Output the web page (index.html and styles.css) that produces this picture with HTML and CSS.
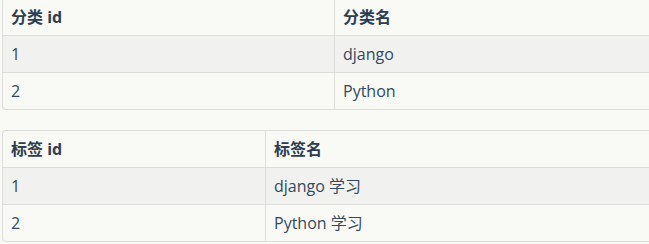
FILE: index.html
```html
<!DOCTYPE html>
<html>
<head>
<meta charset="utf-8">
<link rel="stylesheet" href="styles.css">
</head>
<body>
<div class="page">
  <table class="grid grid-first">
    <thead>
      <tr><th class="col-a1">分类 id</th><th>分类名</th></tr>
    </thead>
    <tbody>
      <tr class="odd"><td>1</td><td>django</td></tr>
      <tr><td>2</td><td>Python</td></tr>
    </tbody>
  </table>
  <table class="grid grid-second">
    <thead>
      <tr><th class="col-a2">标签 id</th><th>标签名</th></tr>
    </thead>
    <tbody>
      <tr class="odd"><td>1</td><td>django 学习</td></tr>
      <tr><td>2</td><td>Python 学习</td></tr>
    </tbody>
  </table>
</div>
</body>
</html>
```
FILE: styles.css
```css
html, body {
  margin: 0;
  padding: 0;
  background: #f9f9f5;
}
body {
  font-family: "Open Sans", "Noto Sans CJK SC", sans-serif;
  font-size: 16px;
  color: #34495e;
  overflow: hidden;
  width: 649px;
}
.page {
  display: flex;
  flex-direction: column;
  gap: 20px;
  padding-left: 2px;
  margin-top: -2px;
  overflow: hidden;
}
.grid {
  border-collapse: separate;
  border-spacing: 0;
  width: 680px;
  flex: none;
  border-top: 1px solid #dddddb;
  border-left: 1px solid #dddddb;
  border-radius: 4px;
  table-layout: fixed;
}
.grid th, .grid td {
  height: 37px;
  padding: 0 8px;
  text-align: left;
  border-bottom: 1px solid #dddddb;
  border-right: 1px solid #dddddb;
  box-sizing: border-box;
  vertical-align: middle;
  line-height: 20px;
}
.grid th {
  font-weight: 700;
  color: #2c3e50;
}
.grid tr > :last-child { border-right: none; }
.grid tbody tr:last-child td:first-child { border-bottom-left-radius: 4px; }
.grid thead tr th:first-child { border-top-left-radius: 4px; }
.odd td { background: #f1f1ef; }
.col-a1 { width: 332px; }
.col-a2 { width: 263px; }
```
